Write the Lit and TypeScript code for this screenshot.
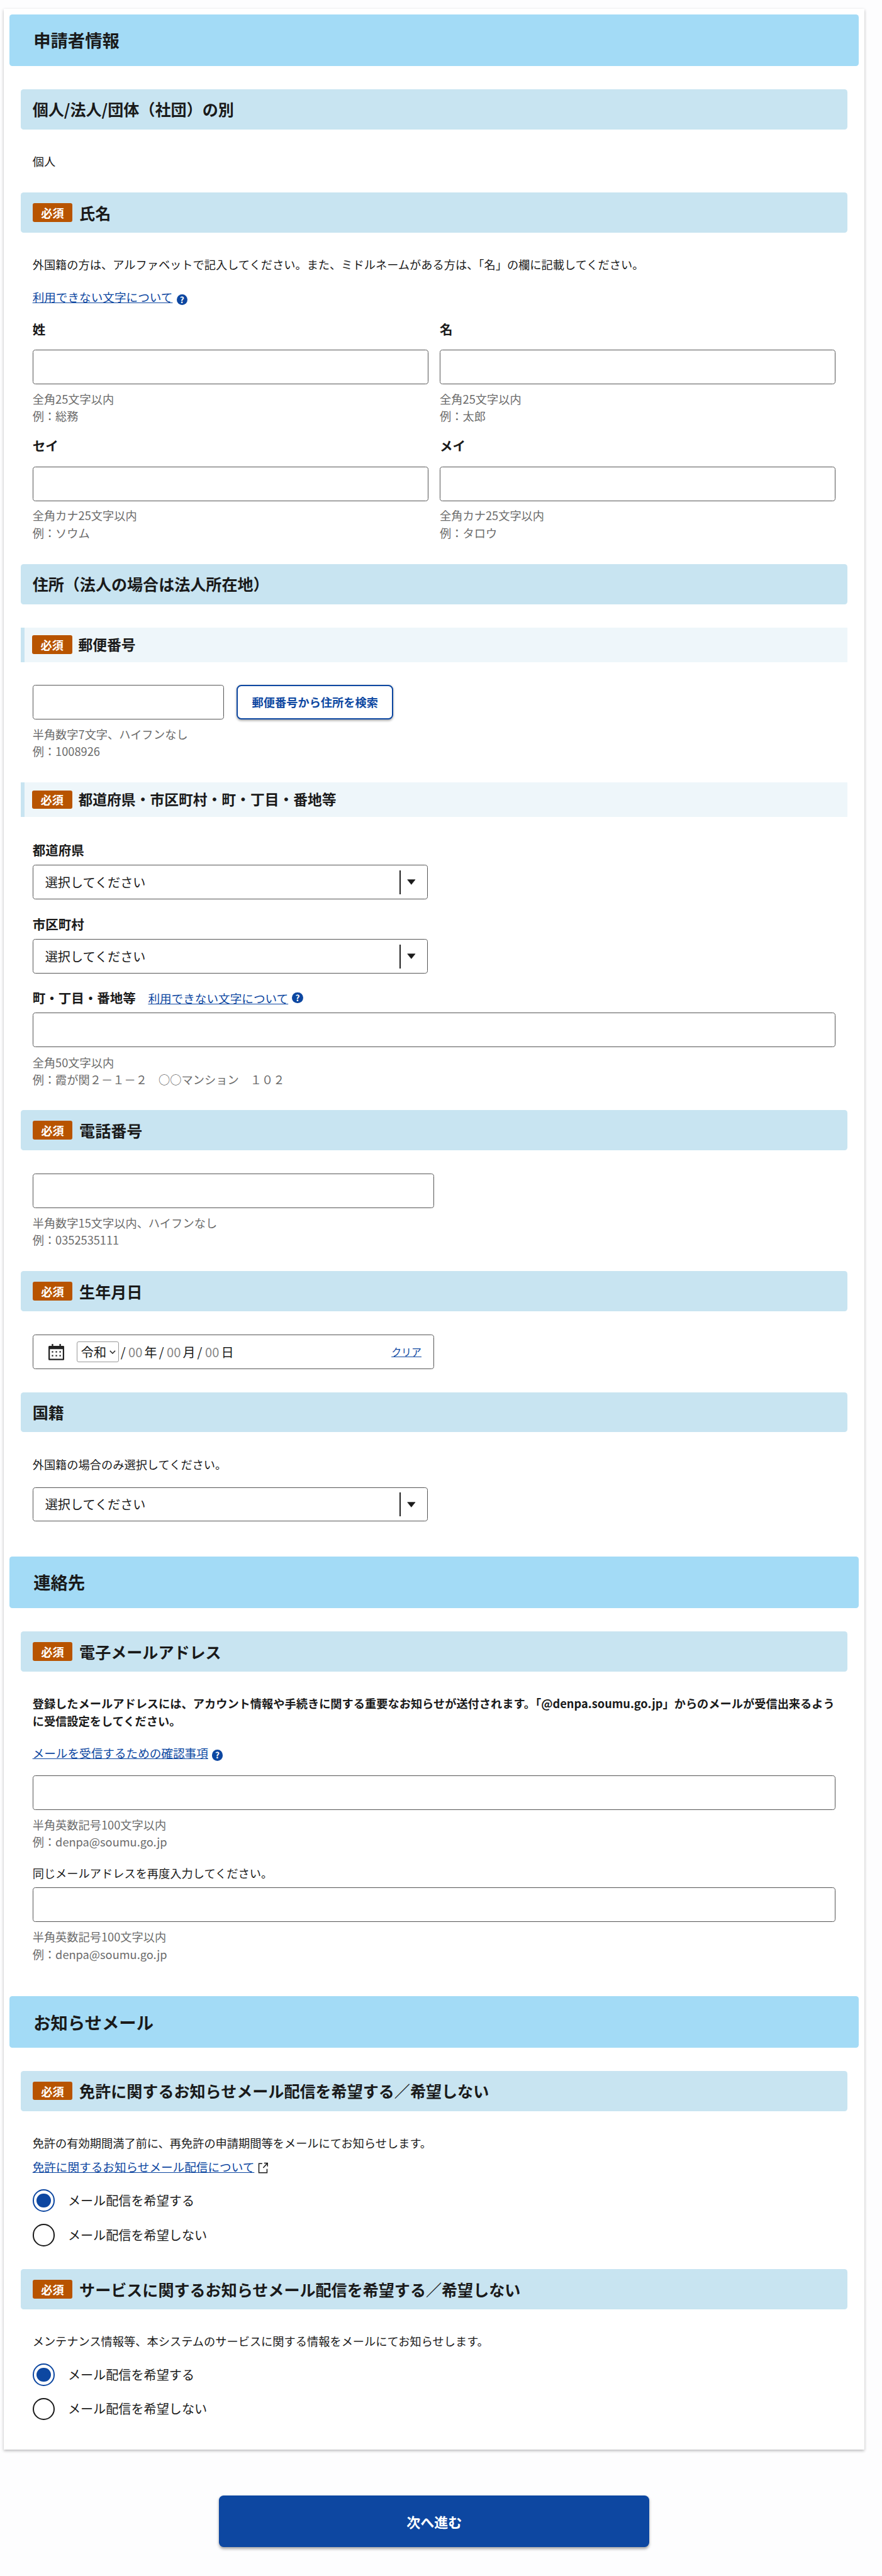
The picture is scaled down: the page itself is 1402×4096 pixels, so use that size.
import { LitElement, html, css } from "lit";
import { customElement } from "lit/decorators.js";

const helpIcon = html`<span class="help">?</span>`;
const extIcon = html`<svg class="ext" viewBox="0 0 21 24" fill="none" stroke="#1a1a1a" stroke-width="2"><path d="M9 3H2v19h17v-8"/><path d="M11 12l8-9M13 2h7v7" /></svg>`;
const calIcon = html`<svg class="cal" viewBox="0 0 33 34" fill="#222"><path fill-rule="evenodd" d="M7 0h3v4h13V0h3v4h5a2 2 0 0 1 2 2v26a2 2 0 0 1-2 2H2a2 2 0 0 1-2-2V6a2 2 0 0 1 2-2h5zM3 11v20h27V11z"/><rect x="7" y="15" width="3" height="3"/><rect x="15" y="15" width="3" height="3"/><rect x="23" y="15" width="3" height="3"/><rect x="7" y="23" width="3" height="3"/><rect x="15" y="23" width="3" height="3"/><rect x="23" y="23" width="3" height="3"/></svg>`;

const badge = html`<span class="badge">必須</span>`;
const h2 = (t: string, c = "") => html`<h2 class="h2 ${c}">${t}</h2>`;
const h3 = (t: string, c: string, req = true) => html`<h3 class="h3 ${c}">${req ? badge : ""}<span>${t}</span></h3>`;
const sub = (t: string, c: string) => html`<h4 class="sub ${c}">${badge}<span>${t}</span></h4>`;
const hint = (a: string, b: string, c = "mt13") => html`<div class="hint ${c}">${a}<br />${b}</div>`;
const sel = (c: string) => html`<div class="select ${c}"><span class="sel-text">選択してください</span><span class="divider"></span><svg class="arrow" viewBox="0 0 18 12"><path d="M1 1h16L9 11z" fill="#1a1a1a" stroke="#1a1a1a" stroke-linejoin="round"/></svg></div>`;
const radio = (t: string, on: boolean, c: string) => html`<div class="radio-row ${c}"><span class="radio ${on ? "on" : ""}"></span><span class="radio-label">${t}</span></div>`;
const field = (label: string, a: string, b: string, c = "") => html`<div class="${c}"><div class="label">${label}</div><input class="input mt25" type="text" />${hint(a, b)}</div>`;

@customElement("app-root")
export class AppRoot extends LitElement {
  static styles = css`
    :host { display: block; zoom: 0.7599; width: 1845px; height: 5391px; background: #fdfdfe; font-family: "Noto Sans CJK JP", "Noto Sans", sans-serif; color: #1a1a1a; font-size: 24px; line-height: 36px; overflow: hidden; }
    * { box-sizing: border-box; }
    .card { margin: 18px 0 0 8px; width: 1800px; padding: 12px 12px 61px; background: #fff; box-shadow: 0 2px 6px rgba(0,0,0,.28); }
    .h2 { margin: 0; height: 108px; background: #a3dbf6; border-radius: 6px; padding-left: 50px; display: flex; align-items: center; font-size: 36px; font-weight: 700; line-height: 1; }
    .sec { padding: 0 24px; }
    .body { padding: 0 24px; }
    .h3 { margin: 0; height: 84px; background: #c8e4f1; border-radius: 6px; padding-left: 24px; display: flex; align-items: center; gap: 14px; font-size: 33px; font-weight: 700; line-height: 1; }
    .sub { margin: 0; height: 72px; background: #eef6fa; border-left: 9px solid #c8e4f1; padding-left: 15px; display: flex; align-items: center; gap: 13px; font-size: 30px; font-weight: 700; line-height: 1; }
    .badge { width: 84px; height: 39px; background: #b85400; border-radius: 4px; color: #fff; font-size: 24px; font-weight: 700; display: flex; align-items: center; justify-content: center; line-height: 1; }
    .label { font-weight: 700; font-size: 27px; }
    .hint { color: #6b6b6b; }
    .bold { font-weight: 700; }
    .link { color: #0d47a1; text-decoration: underline; font-size: 24.5px; }
    .help { display: inline-flex; width: 23px; height: 23px; border-radius: 50%; background: #0d47a1; color: #fff; font-size: 18px; font-weight: 700; line-height: 1; align-items: center; justify-content: center; margin-left: 8px; vertical-align: -2px; }
    .ext { width: 21px; height: 24px; margin-left: 8px; vertical-align: -4px; }
    .input { display: block; width: 100%; height: 72px; border: 1.5px solid #555; border-radius: 6px; background: #fff; padding: 0; }
    .grid { display: grid; grid-template-columns: 828px 828px; column-gap: 24px; }
    .zip-row { display: flex; gap: 26px; }
    .zip { width: 401px; }
    .zip-btn { width: 328px; height: 72px; border: 3px solid #0d47a1; border-radius: 10px; background: #fff; color: #0d47a1; font: 700 24px/1 "Noto Sans CJK JP", sans-serif; box-shadow: 0 2px 5px rgba(0,0,0,.35); padding: 0; }
    .label-row { display: flex; align-items: center; }
    .label-row .link { margin-left: 26px; font-weight: 400; }
    .select { width: 827px; height: 72px; border: 1.5px solid #555; border-radius: 6px; display: flex; align-items: center; padding: 0 24px 0 25px; background: #fff; }
    .sel-text { flex: 1; font-size: 26.5px; line-height: 1; }
    .divider { width: 1.5px; height: 50px; background: #222; }
    .arrow { width: 18px; height: 12px; margin-left: 14px; }
    .tel { width: 840px; }
    .date { width: 840px; height: 72px; border: 1.5px solid #555; border-radius: 6px; display: flex; align-items: center; padding: 0 25px 0 32px; font-size: 26.5px; line-height: 1; }
    .cal { width: 33px; height: 34px; margin-right: 26px; flex: none; }
    .era { width: 88px; height: 44px; border: 1px solid #999; border-radius: 4px; display: flex; align-items: center; padding-left: 8px; gap: 6px; margin-right: 4px; }
    .era svg { width: 13px; height: 8px; }
    .slash { margin-right: 6px; }
    .num { color: #858585; margin-right: 4px; }
    .unit { margin-right: 4px; }
    .clear { margin-left: auto; font-size: 21px; }
    .radio-row { display: flex; align-items: center; gap: 27px; height: 47px; }
    .radio { width: 47px; height: 47px; border-radius: 50%; border: 3px solid #1a1a1a; background: #fff; flex: none; display: flex; align-items: center; justify-content: center; }
    .radio.on { border-color: #0d47a1; }
    .radio.on::after { content: ""; width: 29px; height: 29px; border-radius: 50%; background: #0d47a1; }
    .radio-label { font-size: 26.5px; line-height: 1; }
    .next-wrap { width: 1817px; display: flex; justify-content: center; margin-top: 96px; }
    .next { width: 900px; height: 108px; background: #0d47a1; color: #fff; border: none; border-radius: 10px; font: 700 29px/1 "Noto Sans CJK JP", sans-serif; box-shadow: 0 3px 6px rgba(0,0,0,.35); }
    .mt11 { margin-top: 11px; } .mt13 { margin-top: 13px; } .mt14 { margin-top: 14px; }
    .mt25 { margin-top: 25px; } .mt26 { margin-top: 26px; } .mt29 { margin-top: 29px; } .mt30 { margin-top: 30px; }
    .mt31 { margin-top: 31px; } .mt33 { margin-top: 33px; } .mt34 { margin-top: 34px; } .mt46 { margin-top: 46px; } .mt47 { margin-top: 47px; }
    .mt48 { margin-top: 48px; } .mt49 { margin-top: 49px; } .mt50 { margin-top: 50px; } .mt51 { margin-top: 51px; }
    .mt70 { margin-top: 70px; } .mt73 { margin-top: 73px; }
  `;

  render() {
    return html`
      <main class="card">
        ${h2("申請者情報")}
        <section class="sec">
          ${h3("個人/法人/団体（社団）の別", "mt49", false)}
          <div class="body mt49">個人</div>
          ${h3("氏名", "mt47")}
          <div class="body">
            <div class="mt49">外国籍の方は、アルファベットで記入してください。また、ミドルネームがある方は、「名」の欄に記載してください。</div>
            <div class="mt31"><a class="link">利用できない文字について</a>${helpIcon}</div>
            <div class="grid mt31">
              ${field("姓", "全角25文字以内", "例：総務")}
              ${field("名", "全角25文字以内", "例：太郎")}
              ${field("セイ", "全角カナ25文字以内", "例：ソウム", "mt26")}
              ${field("メイ", "全角カナ25文字以内", "例：タロウ", "mt26")}
            </div>
          </div>
          ${h3("住所（法人の場合は法人所在地）", "mt47", false)}
          ${sub("郵便番号", "mt49")}
          <div class="body">
            <div class="zip-row mt48"><input class="input zip" type="text" /><button class="zip-btn">郵便番号から住所を検索</button></div>
            ${hint("半角数字7文字、ハイフンなし", "例：1008926")}
          </div>
          ${sub("都道府県・市区町村・町・丁目・番地等", "mt47")}
          <div class="body">
            <div class="label mt51">都道府県</div>
            ${sel("mt14")}
            <div class="label mt34">市区町村</div>
            ${sel("mt13")}
            <div class="label-row mt33"><span class="label">町・丁目・番地等</span><a class="link">利用できない文字について</a>${helpIcon}</div>
            <input class="input mt13" type="text" />
            ${hint("全角50文字以内", "例：霞が関２－１－２　○○マンション　１０２", "mt14")}
          </div>
          ${h3("電話番号", "mt46")}
          <div class="body">
            <input class="input tel mt49" type="text" />
            ${hint("半角数字15文字以内、ハイフンなし", "例：0352535111")}
          </div>
          ${h3("生年月日", "mt47")}
          <div class="body">
            <div class="date mt49">
              ${calIcon}
              <span class="era">令和<svg viewBox="0 0 13 8" fill="none" stroke="#222" stroke-width="2"><path d="M1 1l5.5 5.5L12 1"/></svg></span>
              <span class="slash">/</span><span class="num">00</span><span class="unit">年</span>
              <span class="slash">/</span><span class="num">00</span><span class="unit">月</span>
              <span class="slash">/</span><span class="num">00</span><span class="unit">日</span>
              <a class="link clear">クリア</a>
            </div>
          </div>
          ${h3("国籍", "mt48", false)}
          <div class="body">
            <div class="mt50">外国籍の場合のみ選択してください。</div>
            ${sel("mt29")}
          </div>
        </section>
        ${h2("連絡先", "mt73")}
        <section class="sec">
          ${h3("電子メールアドレス", "mt49")}
          <div class="body">
            <div class="bold mt49">登録したメールアドレスには、アカウント情報や手続きに関する重要なお知らせが送付されます。「@denpa.soumu.go.jp」からのメールが受信出来るように受信設定をしてください。</div>
            <div class="mt30"><a class="link">メールを受信するための確認事項</a>${helpIcon}</div>
            <input class="input mt29" type="text" />
            ${hint("半角英数記号100文字以内", "例：denpa@soumu.go.jp")}
            <div class="mt30">同じメールアドレスを再度入力してください。</div>
            <input class="input mt11" type="text" />
            ${hint("半角英数記号100文字以内", "例：denpa@soumu.go.jp", "mt14")}
          </div>
        </section>
        ${h2("お知らせメール", "mt70")}
        <section class="sec">
          ${h3("免許に関するお知らせメール配信を希望する／希望しない", "mt48")}
          <div class="body">
            <div class="mt49">免許の有効期間満了前に、再免許の申請期間等をメールにてお知らせします。</div>
            <div class="mt13"><a class="link">免許に関するお知らせメール配信について</a>${extIcon}</div>
            ${radio("メール配信を希望する", true, "mt29")}
            ${radio("メール配信を希望しない", false, "mt25")}
          </div>
          ${h3("サービスに関するお知らせメール配信を希望する／希望しない", "mt48")}
          <div class="body">
            <div class="mt48">メンテナンス情報等、本システムのサービスに関する情報をメールにてお知らせします。</div>
            ${radio("メール配信を希望する", true, "mt29")}
            ${radio("メール配信を希望しない", false, "mt25")}
          </div>
        </section>
      </main>
      <div class="next-wrap"><button class="next">次へ進む</button></div>
    `;
  }
}
